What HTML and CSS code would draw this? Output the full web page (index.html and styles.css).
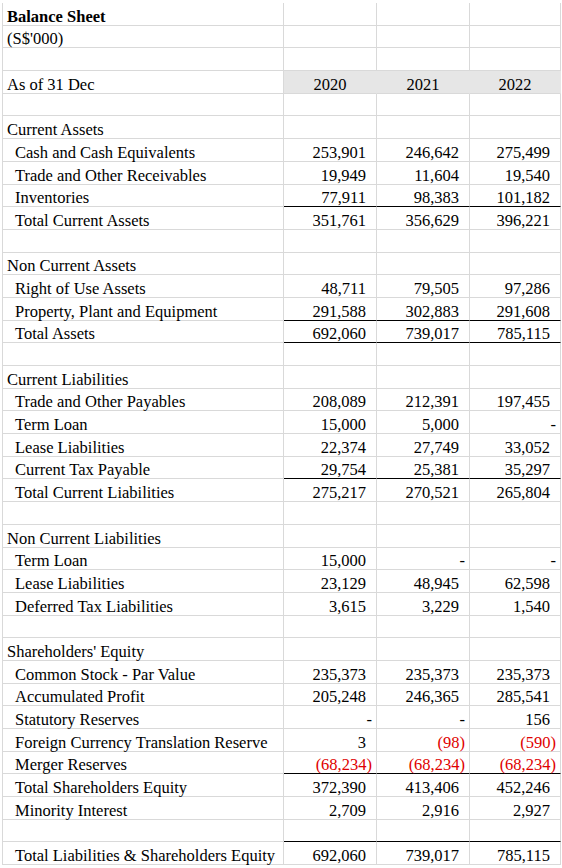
FILE: index.html
```html
<!DOCTYPE html>
<html>
<head>
<meta charset="utf-8">
<link rel="stylesheet" href="styles.css">
</head>
<body>
<div class="sheet">
  <div class="c lbl b">Balance Sheet</div><div class="c"></div><div class="c"></div><div class="c"></div>
  <div class="c lbl">(S$'000)</div><div class="c"></div><div class="c"></div><div class="c"></div>
  <div class="c lbl"></div><div class="c"></div><div class="c"></div><div class="c"></div>
  <div class="c lbl">As of 31 Dec</div><div class="c hd">2020</div><div class="c hd">2021</div><div class="c hd">2022</div>
  <div class="c lbl"></div><div class="c"></div><div class="c"></div><div class="c"></div>

  <div class="c lbl">Current Assets</div><div class="c"></div><div class="c"></div><div class="c"></div>
  <div class="c lbl ind">Cash and Cash Equivalents</div><div class="c num">253,901</div><div class="c num">246,642</div><div class="c num">275,499</div>
  <div class="c lbl ind">Trade and Other Receivables</div><div class="c num">19,949</div><div class="c num">11,604</div><div class="c num">19,540</div>
  <div class="c lbl ind">Inventories</div><div class="c num ul">77,911</div><div class="c num ul">98,383</div><div class="c num ul">101,182</div>
  <div class="c lbl ind">Total Current Assets</div><div class="c num">351,761</div><div class="c num">356,629</div><div class="c num">396,221</div>
  <div class="c lbl"></div><div class="c"></div><div class="c"></div><div class="c"></div>

  <div class="c lbl">Non Current Assets</div><div class="c"></div><div class="c"></div><div class="c"></div>
  <div class="c lbl ind">Right of Use Assets</div><div class="c num">48,711</div><div class="c num">79,505</div><div class="c num">97,286</div>
  <div class="c lbl ind">Property, Plant and Equipment</div><div class="c num ul">291,588</div><div class="c num ul">302,883</div><div class="c num ul">291,608</div>
  <div class="c lbl ind">Total Assets</div><div class="c num ul">692,060</div><div class="c num ul">739,017</div><div class="c num ul">785,115</div>
  <div class="c lbl"></div><div class="c"></div><div class="c"></div><div class="c"></div>

  <div class="c lbl">Current Liabilities</div><div class="c"></div><div class="c"></div><div class="c"></div>
  <div class="c lbl ind">Trade and Other Payables</div><div class="c num">208,089</div><div class="c num">212,391</div><div class="c num">197,455</div>
  <div class="c lbl ind">Term Loan</div><div class="c num">15,000</div><div class="c num">5,000</div><div class="c num dash">-</div>
  <div class="c lbl ind">Lease Liabilities</div><div class="c num">22,374</div><div class="c num">27,749</div><div class="c num">33,052</div>
  <div class="c lbl ind">Current Tax Payable</div><div class="c num ul">29,754</div><div class="c num ul">25,381</div><div class="c num ul">35,297</div>
  <div class="c lbl ind">Total Current Liabilities</div><div class="c num">275,217</div><div class="c num">270,521</div><div class="c num">265,804</div>
  <div class="c lbl"></div><div class="c"></div><div class="c"></div><div class="c"></div>

  <div class="c lbl">Non Current Liabilities</div><div class="c"></div><div class="c"></div><div class="c"></div>
  <div class="c lbl ind">Term Loan</div><div class="c num">15,000</div><div class="c num dash">-</div><div class="c num dash">-</div>
  <div class="c lbl ind">Lease Liabilities</div><div class="c num">23,129</div><div class="c num">48,945</div><div class="c num">62,598</div>
  <div class="c lbl ind">Deferred Tax Liabilities</div><div class="c num">3,615</div><div class="c num">3,229</div><div class="c num">1,540</div>
  <div class="c lbl"></div><div class="c"></div><div class="c"></div><div class="c"></div>

  <div class="c lbl">Shareholders' Equity</div><div class="c"></div><div class="c"></div><div class="c"></div>
  <div class="c lbl ind">Common Stock - Par Value</div><div class="c num">235,373</div><div class="c num">235,373</div><div class="c num">235,373</div>
  <div class="c lbl ind">Accumulated Profit</div><div class="c num">205,248</div><div class="c num">246,365</div><div class="c num">285,541</div>
  <div class="c lbl ind">Statutory Reserves</div><div class="c num dash">-</div><div class="c num dash">-</div><div class="c num">156</div>
  <div class="c lbl ind">Foreign Currency Translation Reserve</div><div class="c num">3</div><div class="c num neg">(98)</div><div class="c num neg">(590)</div>
  <div class="c lbl ind">Merger Reserves</div><div class="c num neg ul">(68,234)</div><div class="c num neg ul">(68,234)</div><div class="c num neg ul">(68,234)</div>
  <div class="c lbl ind">Total Shareholders Equity</div><div class="c num">372,390</div><div class="c num">413,406</div><div class="c num">452,246</div>
  <div class="c lbl ind">Minority Interest</div><div class="c num">2,709</div><div class="c num">2,916</div><div class="c num">2,927</div>
  <div class="c lbl"></div><div class="c ul"></div><div class="c ul"></div><div class="c ul"></div>

  <div class="c lbl ind">Total Liabilities &amp; Shareholders Equity</div><div class="c num">692,060</div><div class="c num">739,017</div><div class="c num">785,115</div>
</div>
</body>
</html>
```
FILE: styles.css
```css
html, body {
  margin: 0;
  padding: 0;
  background: #ffffff;
}
body {
  font-family: "Liberation Serif", "Times New Roman", serif;
  font-size: 16.5px;
  color: #000;
  overflow: hidden;
}
.sheet {
  margin: 3px 0 0 2px;
  width: 559px;
  display: grid;
  grid-template-columns: 281px 93px 93px 91px;
  grid-auto-rows: 22.7px;
  border-left: 1px solid #d9d9d9;
}
.c {
  box-sizing: border-box;
  border-right: 1px solid #d9d9d9;
  border-bottom: 1px solid #d9d9d9;
  display: flex;
  align-items: flex-end;
  line-height: 16px;
  padding-bottom: 0;
  white-space: nowrap;
  overflow: visible;
}
.lbl {
  padding-left: 4px;
}
.ind {
  padding-left: 12px;
}
.b {
  font-weight: bold;
}
.hd {
  background: #e6e6e6;
  border-right-color: #e6e6e6;
  justify-content: center;
}
.num {
  justify-content: flex-end;
  padding-right: 10px;
}
.neg {
  color: #e00000;
  padding-right: 4px;
}
.dash {
  padding-right: 4px;
}
.ul {
  border-bottom-color: #000;
}
```
